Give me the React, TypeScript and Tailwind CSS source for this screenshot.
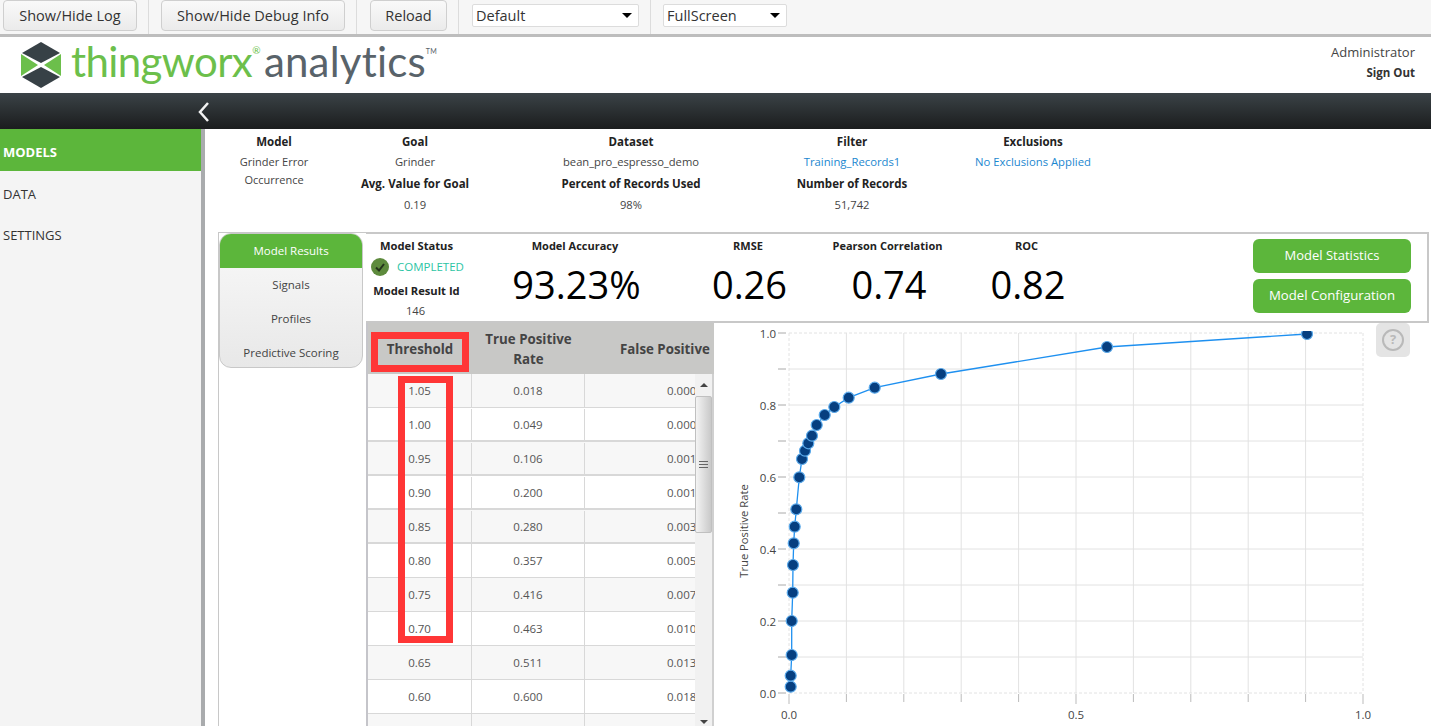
const font = { fontFamily: '"Open Sans", "Noto Sans", sans-serif' };

const rows = [
  ["1.05", "0.018", "0.000"], ["1.00", "0.049", "0.000"], ["0.95", "0.106", "0.001"],
  ["0.90", "0.200", "0.001"], ["0.85", "0.280", "0.003"], ["0.80", "0.357", "0.005"],
  ["0.75", "0.416", "0.007"], ["0.70", "0.463", "0.010"], ["0.65", "0.511", "0.013"],
  ["0.60", "0.600", "0.018"], ["", "", ""],
];

// page coordinates, the svg viewBox starts at the chart's top left
const points = [
  [790.7, 686.7], [790.7, 675.7], [791.7, 655], [791.7, 621], [792.7, 592.7], [793, 565],
  [793.7, 543.3], [794.7, 526.7], [796.3, 509.3], [799.3, 477.3], [802, 459], [805, 450.7],
  [808.3, 443.3], [812, 435.7], [816.7, 425], [824.7, 415], [834.3, 407], [848.7, 397.7],
  [874.7, 387.7], [941, 374], [1107, 347], [1307, 334],
];

function ToolButton({ label, w }: { label: string; w: string }) {
  return (
    <button className={`${w} h-[31px] pt-px rounded-[4px] border border-[#cfcfcf] bg-gradient-to-b from-[#f9f9f9] to-[#ebebeb] text-[14.5px] text-[#333]`}>
      {label}
    </button>
  );
}

function Divider() {
  return <div className="w-px h-[34px] bg-[#dcdcdc]" />;
}

function FakeSelect({ label, w }: { label: string; w: string }) {
  return (
    <div className={`${w} h-[23px] mt-1 flex items-center justify-between bg-white border border-[#dcdcdc] rounded-[2px] pl-[3px] pr-[6px] text-[14.5px] text-[#333]`}>
      <span className="pt-px">{label}</span>
      <span className="w-0 h-0 border-x-[5px] border-x-transparent border-t-[5px] border-t-black" />
    </div>
  );
}

function Toolbar() {
  return (
    <div className="h-[37px] shrink-0 flex items-start bg-[#f6f6f6] border-b-[3px] border-[#bdbdbd] pl-[3px]">
      <ToolButton label="Show/Hide Log" w="w-[134px]" />
      <div className="w-[11px]" /><Divider /><div className="w-[12px]" />
      <ToolButton label="Show/Hide Debug Info" w="w-[184px]" />
      <div className="w-[11px]" /><Divider /><div className="w-[13px]" />
      <ToolButton label="Reload" w="w-[77px]" />
      <div className="w-[11px]" /><Divider /><div className="w-[13px]" />
      <FakeSelect label="Default" w="w-[167px]" />
      <div className="w-[11px]" /><Divider /><div className="w-[12px]" />
      <FakeSelect label="FullScreen" w="w-[124px]" />
    </div>
  );
}

function Logo() {
  return (
    <div className="flex items-start pl-[21px] pt-[5px]">
      <svg width="40" height="46" viewBox="0 0 40 46" className="shrink-0">
        <polygon points="20,0 39,11 20,21 1,11" fill="#374146" />
        <polygon points="20,25 39,35 20,46 1,35" fill="#374146" />
        <polygon points="0,12 17,23 0,34" fill="#6cbf4b" />
        <polygon points="40,12 23,23 40,34" fill="#6cbf4b" />
      </svg>
      <span className="ml-[10px] -mt-[13px] text-[42px] leading-[64px] font-normal tracking-[-0.6px] text-[#6cbf4b] whitespace-nowrap" style={{ fontFamily: "Lato, sans-serif" }}>
        thingworx<sup className="text-[10px] align-[18px]">®</sup>
      </span>
      <span className="ml-[4px] -mt-[13px] text-[42px] leading-[64px] font-normal tracking-[0.2px] text-[#59636a] whitespace-nowrap" style={{ fontFamily: "Lato, sans-serif" }}>
        analytics<sup className="text-[7px] align-[20px]">TM</sup>
      </span>
    </div>
  );
}

function Header() {
  return (
    <div className="h-[56px] shrink-0 flex justify-between bg-white">
      <Logo />
      <div className="pr-[16px] pt-[6px] text-right">
        <div className="text-[13px] leading-[18px] text-[#444]">Administrator</div>
        <div className="text-[11.5px] leading-[16px] mt-[4px] font-bold text-[#333]">Sign Out</div>
      </div>
    </div>
  );
}

function DarkBar() {
  return (
    <div className="h-[36px] shrink-0 flex items-center pl-[196px] pt-[2px] bg-gradient-to-b from-[#3b4347] to-[#1b1d1e]">
      <svg width="16" height="24" viewBox="0 0 16 24">
        <path d="M12 3 L4 12 L12 21" fill="none" stroke="#f2f2f2" strokeWidth="2.5" />
      </svg>
    </div>
  );
}

function Sidebar() {
  return (
    <div className="w-[205px] shrink-0 bg-[#f4f4f4] border-r-[4px] border-[#a9abad] text-[13px]">
      <div className="h-[42px] flex items-center pl-[3px] pt-[5px] bg-[#5cb63b] text-white font-bold">MODELS</div>
      <div className="h-[42px] flex items-center pl-[3px] pt-[5px] text-[#333]">DATA</div>
      <div className="h-[40px] flex items-center pl-[3px] pt-[5px] text-[#333]">SETTINGS</div>
    </div>
  );
}

function InfoCol({ w, items }: { w: string; items: [string, "b" | "t" | "l"][] }) {
  return (
    <div className={`${w} shrink-0 pt-[4px] flex flex-col items-center text-center leading-[18px]`}>
      {items.map(([t, k], i) => (
        <div key={t} className={`${i === 0 ? "h-[20px]" : i === 1 ? "h-[22px]" : "h-[21px]"} ${
          k === "b" ? "text-[11.5px] font-bold text-[#222]" :
          k === "l" ? "text-[11.3px] text-[#1b87cf]" : "text-[11.2px] text-[#444]"
        }`}>{t}</div>
      ))}
    </div>
  );
}

function InfoRow() {
  return (
    <div className="h-[103px] shrink-0 flex bg-white">
      <div className="w-[138px] shrink-0 pt-[4px] flex flex-col items-center text-center text-[11px] leading-[18px]">
        <div className="text-[11.5px] font-bold text-[#222] h-[20px]">Model</div>
        <div className="text-[#444]">Grinder Error</div>
        <div className="text-[#444]">Occurrence</div>
      </div>
      <InfoCol w="w-[144px]" items={[["Goal", "b"], ["Grinder", "t"], ["Avg. Value for Goal", "b"], ["0.19", "t"]]} />
      <InfoCol w="w-[288px]" items={[["Dataset", "b"], ["bean_pro_espresso_demo", "t"], ["Percent of Records Used", "b"], ["98%", "t"]]} />
      <InfoCol w="w-[154px]" items={[["Filter", "b"], ["Training_Records1", "l"], ["Number of Records", "b"], ["51,742", "t"]]} />
      <InfoCol w="w-[208px]" items={[["Exclusions", "b"], ["No Exclusions Applied", "l"]]} />
    </div>
  );
}

function Tabs() {
  return (
    <div className="w-[147px] shrink-0 border-t border-[#c8c8c8]">
      <div className="w-[144px] h-[135px] rounded-[12px] border border-[#c8c8c8] overflow-hidden bg-gradient-to-b from-[#f9f9f9] to-[#e8e8e8] text-[11.5px] text-[#444] text-center">
        <div className="h-[34px] flex items-center justify-center bg-[#5cb63b] text-white">Model Results</div>
        <div className="h-[34px] flex items-center justify-center">Signals</div>
        <div className="h-[34px] flex items-center justify-center">Profiles</div>
        <div className="h-[34px] flex items-center justify-center">Predictive Scoring</div>
      </div>
    </div>
  );
}

function Metric({ w, label, value }: { w: string; label: string; value: string }) {
  return (
    <div className={`${w} shrink-0 flex flex-col items-center`}>
      <div className="text-[11px] font-bold leading-[18px] text-[#222] mt-[3px] pr-[3px]">{label}</div>
      <div className="text-[38px] leading-[50px] mt-[4px] text-black">{value}</div>
    </div>
  );
}

function StatusBar() {
  return (
    <div className="h-[91px] shrink-0 mr-[2px] flex border-y-2 border-r-2 border-[#c8c8c8] bg-white">
      <div className="w-[99px] shrink-0 flex flex-col text-[11.2px] leading-[18px]">
        <div className="font-bold text-[#222] text-center mt-[3px] pl-[2px]">Model Status</div>
        <div className="flex items-center pl-[5px] h-[23px]">
          <span className="w-[18px] h-[18px] rounded-full bg-[#5d8a3c] flex items-center justify-center">
            <svg width="12" height="12" viewBox="0 0 12 12">
              <path d="M2 6.5 L5 9.5 L10 3" fill="none" stroke="#23331a" strokeWidth="2" />
            </svg>
          </span>
          <span className="ml-[8px] text-[11.5px] text-[#2bc4a4]">COMPLETED</span>
        </div>
        <div className="font-bold text-[#222] text-center pl-[2px] mt-[4px]">Model Result Id</div>
        <div className="text-[#444] text-center pt-[2px]">146</div>
      </div>
      <Metric w="w-[223px]" label="Model Accuracy" value="93.23%" />
      <Metric w="w-[123px]" label="RMSE" value="0.26" />
      <Metric w="w-[156px]" label="Pearson Correlation" value="0.74" />
      <Metric w="w-[122px]" label="ROC" value="0.82" />
      <div className="ml-auto pr-[16px] pt-[5px] flex flex-col gap-[6px]">
        <button className="w-[158px] h-[34px] rounded-[6px] bg-[#5cb63b] text-white text-[13px]">Model Statistics</button>
        <button className="w-[158px] h-[34px] rounded-[6px] bg-[#5cb63b] text-white text-[13.2px]">Model Configuration</button>
      </div>
    </div>
  );
}

function Table() {
  return (
    <div className="relative w-[348px] shrink-0 h-[403px] overflow-hidden border-l-2 border-[#c5c5ca] bg-white">
      <div className="h-[51px] flex bg-[#c8c8c6] text-[13.3px] font-bold leading-[20px] text-[#444]">
        <div className="w-[104px] flex items-center justify-center">Threshold</div>
        <div className="w-[113px] flex items-center justify-center text-center">True Positive<br />Rate</div>
        <div className="w-[129px] flex items-center pl-[35px] whitespace-nowrap overflow-hidden">False Positive</div>
      </div>
      <div className="flex">
        <div className="w-[327px] shrink-0">
          {rows.map((r, i) => (
            <div key={i} className={`h-[34px] flex items-center text-[11.5px] text-[#555] border-b border-[#d8d8d8] ${i % 2 === 0 ? "bg-[#f7f7f7]" : "bg-white"} ${i >= 1 && i <= 4 ? "border-b-2 pt-px" : ""}`}>
              <div className="w-[104px] h-full flex items-center justify-center border-r border-[#d8d8d8]">{r[0]}</div>
              <div className="w-[113px] h-full flex items-center justify-center border-r border-[#d8d8d8]">{r[1]}</div>
              <div className="w-[110px] pl-[82px] whitespace-nowrap overflow-hidden">{r[2]}</div>
            </div>
          ))}
        </div>
        <div className="w-[19px] h-[352px] shrink-0 flex flex-col bg-[#f1f1f1] border-r-2 border-[#d0d0d0]">
          <div className="h-[22px] flex items-center justify-center">
            <span className="w-0 h-0 border-x-[4px] border-x-transparent border-b-[4px] border-b-[#444]" />
          </div>
          <div className="h-[137px] flex items-center justify-center border border-[#c0c0c0] rounded-[2px] bg-gradient-to-r from-[#f4f4f4] to-[#c9c9c9]">
            <div className="w-[9px] h-[7px] border-y border-[#666] flex items-center">
              <div className="w-full h-px bg-[#666]" />
            </div>
          </div>
          <div className="flex-1 flex items-end justify-center pb-[2px]">
            <span className="w-0 h-0 border-x-[4px] border-x-transparent border-t-[4px] border-t-[#444]" />
          </div>
        </div>
      </div>
      <div className="absolute left-[3px] top-[9px] w-[98px] h-[40px] border-[7px] border-[#ff3636]" />
      <div className="absolute left-[30px] top-[53px] w-[55px] h-[267px] border-[7px] border-[#ff3636]" />
    </div>
  );
}

function RocChart() {
  const xs = Array.from({ length: 11 }, (_, i) => 789 + i * 57.4);
  const ys = Array.from({ length: 11 }, (_, i) => 333 + i * 36);
  const labels = ["1.0", "0.8", "0.6", "0.4", "0.2", "0.0"];
  return (
    <div className="relative flex-1 h-[403px] bg-white">
      <svg width="717" height="403" viewBox="714 323 717 403" className="block">
        <defs>
          <clipPath id="plot"><rect x="770" y="331" width="640" height="380" /></clipPath>
        </defs>
        {xs.map((x, i) => (
          <g key={x}>
            <line x1={x} y1={333} x2={x} y2={693} stroke="#e2e2e2" strokeWidth="1" strokeDasharray={i === 0 || i === 10 ? "3 2" : undefined} />
            <line x1={x} y1={694} x2={x} y2={i % 5 === 0 ? 704 : 702} stroke="#bbb" />
          </g>
        ))}
        {ys.map((y, i) => (
          <g key={y}>
            <line x1={789} y1={y} x2={1363} y2={y} stroke="#e2e2e2" strokeWidth="1" strokeDasharray={i === 0 || i === 10 ? "3 2" : undefined} />
            <line x1={778} y1={y} x2={786} y2={y} stroke="#aaa" />
          </g>
        ))}
        {labels.map((t, i) => (
          <text key={t} x={776} y={338 + i * 72} textAnchor="end" fontSize="11.5" fill="#444">{t}</text>
        ))}
        {["0.0", "0.5", "1.0"].map((t, i) => (
          <text key={t} x={789 + i * 287} y={719} textAnchor="middle" fontSize="11.5" fill="#444">{t}</text>
        ))}
        <text transform="translate(748 531) rotate(-90)" textAnchor="middle" fontSize="11.2" fill="#444">True Positive Rate</text>
        <g clipPath="url(#plot)">
          <polyline points={points.map((p) => p.join(",")).join(" ")} fill="none" stroke="#1e90f0" strokeWidth="1.3" />
          {points.map(([x, y]) => (
            <circle key={`${x}-${y}`} cx={x} cy={y} r="5.5" fill="#063f80" stroke="#5aa9ea" strokeWidth="1.2" />
          ))}
        </g>
      </svg>
      <div className="absolute left-[662px] top-0 w-[34px] h-[34px] rounded-[5px] bg-[#e4e4e4] flex items-center justify-center">
        <span className="w-[22px] h-[22px] rounded-full border-2 border-[#b9b9b9] flex items-center justify-center text-[13px] font-bold text-[#b9b9b9]">?</span>
      </div>
    </div>
  );
}

export default function App() {
  return (
    <div className="w-[1431px] h-[726px] overflow-hidden flex flex-col bg-white" style={font}>
      <Toolbar />
      <Header />
      <DarkBar />
      <div className="flex-1 flex min-h-0">
        <Sidebar />
        <div className="flex-1 flex flex-col min-w-0">
          <InfoRow />
          <div className="flex-1 flex ml-[13px] border-l border-[#c8c8c8] min-h-0">
            <Tabs />
            <div className="flex-1 flex flex-col min-w-0">
              <StatusBar />
              <div className="flex">
                <Table />
                <RocChart />
              </div>
            </div>
          </div>
        </div>
      </div>
    </div>
  );
}
